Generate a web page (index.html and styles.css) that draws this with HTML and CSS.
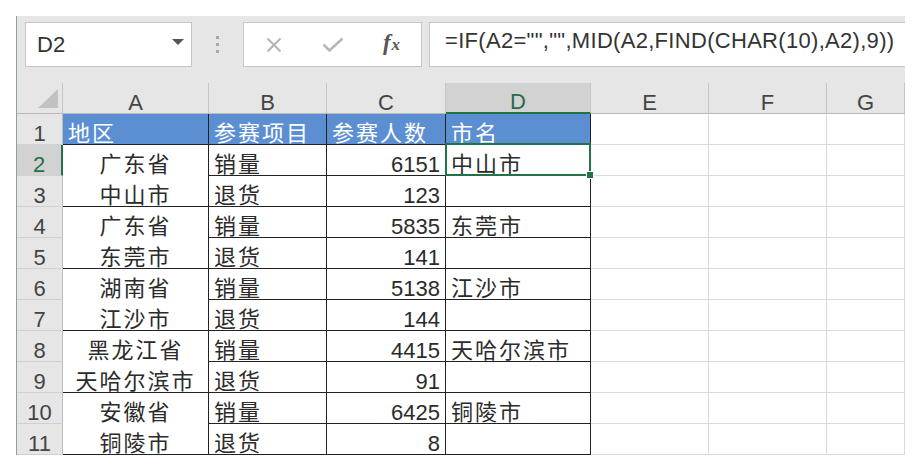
FILE: index.html
```html
<!DOCTYPE html>
<html lang="zh-CN">
<head>
    <meta charset="UTF-8">
    <meta name="viewport" content="width=device-width, initial-scale=1.0">
    <title>市名提取</title>
    <link rel="stylesheet" href="styles.css">
</head>
<body>
    <div class="excel">
        <!-- 编辑栏 -->
        <div class="fbar">
            <div class="namebox">
                <span>D2</span>
                <span class="caret"></span>
            </div>
            <div class="dots"><i></i><i></i><i></i></div>
            <div class="fxbox">
                <span class="btn">
                    <svg width="16" height="16" viewBox="0 0 16 16"><path d="M1.5 1.5 L14.5 14.5 M14.5 1.5 L1.5 14.5" stroke="#b3b3b3" stroke-width="2" fill="none"/></svg>
                </span>
                <span class="btn">
                    <svg width="22" height="15" viewBox="0 0 22 15"><path d="M1.5 7.5 L7.5 13.5 L20.5 1.5" stroke="#b8b8b8" stroke-width="2.6" fill="none"/></svg>
                </span>
                <span class="btn fx">f<span class="fx-x">x</span></span>
            </div>
            <div class="formula">=IF(A2="","",MID(A2,FIND(CHAR(10),A2),9))</div>
        </div>

        <!-- 工作表 -->
        <div class="sheet">
            <div class="ch corner"><svg width="20" height="19" viewBox="0 0 20 19"><polygon points="20,0 20,19 0,19" fill="#c2c2c2"/></svg></div>
            <div class="ch">A</div>
            <div class="ch">B</div>
            <div class="ch">C</div>
            <div class="ch sel">D</div>
            <div class="ch">E</div>
            <div class="ch">F</div>
            <div class="ch">G</div>

            <div class="rh">1</div>
            <div class="d hd cn">地区</div>
            <div class="d hd cn">参赛项目</div>
            <div class="d hd cn">参赛人数</div>
            <div class="d hd cn">市名</div>
            <div class="g"></div><div class="g"></div><div class="g"></div>

            <div class="rh sel">2</div>
            <div class="d m cn"><span>广东省</span><span>中山市</span></div>
            <div class="d cn">销量</div>
            <div class="d r">6151</div>
            <div class="d cn active">中山市<span class="selbox"><span class="handle"></span></span></div>
            <div class="g"></div><div class="g"></div><div class="g"></div>

            <div class="rh">3</div>
            <div class="d cn">退货</div>
            <div class="d r">123</div>
            <div class="d"></div>
            <div class="g"></div><div class="g"></div><div class="g"></div>

            <div class="rh">4</div>
            <div class="d m cn"><span>广东省</span><span>东莞市</span></div>
            <div class="d cn">销量</div>
            <div class="d r">5835</div>
            <div class="d cn">东莞市</div>
            <div class="g"></div><div class="g"></div><div class="g"></div>

            <div class="rh">5</div>
            <div class="d cn">退货</div>
            <div class="d r">141</div>
            <div class="d"></div>
            <div class="g"></div><div class="g"></div><div class="g"></div>

            <div class="rh">6</div>
            <div class="d m cn"><span>湖南省</span><span>江沙市</span></div>
            <div class="d cn">销量</div>
            <div class="d r">5138</div>
            <div class="d cn">江沙市</div>
            <div class="g"></div><div class="g"></div><div class="g"></div>

            <div class="rh">7</div>
            <div class="d cn">退货</div>
            <div class="d r">144</div>
            <div class="d"></div>
            <div class="g"></div><div class="g"></div><div class="g"></div>

            <div class="rh">8</div>
            <div class="d m cn"><span>黑龙江省</span><span>天哈尔滨市</span></div>
            <div class="d cn">销量</div>
            <div class="d r">4415</div>
            <div class="d cn">天哈尔滨市</div>
            <div class="g"></div><div class="g"></div><div class="g"></div>

            <div class="rh">9</div>
            <div class="d cn">退货</div>
            <div class="d r">91</div>
            <div class="d"></div>
            <div class="g"></div><div class="g"></div><div class="g"></div>

            <div class="rh">10</div>
            <div class="d m cn"><span>安徽省</span><span>铜陵市</span></div>
            <div class="d cn">销量</div>
            <div class="d r">6425</div>
            <div class="d cn">铜陵市</div>
            <div class="g"></div><div class="g"></div><div class="g"></div>

            <div class="rh">11</div>
            <div class="d cn">退货</div>
            <div class="d r">8</div>
            <div class="d"></div>
            <div class="g"></div><div class="g"></div><div class="g"></div>
        </div>
    </div>
</body>
</html>
```

FILE: styles.css
```css
* {
    margin: 0;
    padding: 0;
    box-sizing: border-box;
}

body {
    background: #fff;
    font-family: "Liberation Sans", "Noto Sans CJK SC", sans-serif;
    font-size: 22px;
}

.excel {
    margin: 16px 0 0 16px;
    width: 889px;
    border-left: 1px solid #8fa095;
}

/* 编辑栏 */
.fbar {
    height: 67px;
    background: #e6e6e6;
    display: flex;
    align-items: flex-start;
    padding: 6px 0 0 8px;
}

.namebox {
    width: 167px;
    height: 45px;
    border: 1px solid #c6c6c6;
    background: #fff;
    display: flex;
    align-items: center;
    justify-content: space-between;
    padding: 0 7px 0 11px;
    color: #333;
    line-height: 30px;
}

.caret {
    width: 0;
    height: 0;
    border-left: 6.5px solid transparent;
    border-right: 6.5px solid transparent;
    border-top: 6px solid #555;
    margin-bottom: 5px;
}

.dots {
    width: 51px;
    height: 45px;
    display: flex;
    flex-direction: column;
    align-items: center;
    justify-content: center;
    gap: 4px;
}

.dots i {
    display: block;
    width: 3px;
    height: 3px;
    background: #a8a8a8;
}

.fxbox {
    width: 179px;
    height: 45px;
    border: 1px solid #c6c6c6;
    background: #fff;
    display: flex;
}

.btn {
    width: 59px;
    display: flex;
    align-items: center;
    justify-content: center;
}

.fx {
    font-family: "Liberation Serif", serif;
    font-style: italic;
    font-weight: bold;
    color: #555;
    font-size: 23px;
    line-height: 24px;
    align-items: baseline;
    padding-top: 8px;
}

.fx-x {
    font-size: 17px;
    margin-left: 1px;
}

.formula {
    flex: 1;
    height: 45px;
    margin-left: 7px;
    border: 1px solid #c6c6c6;
    border-right: none;
    background: #fff;
    padding: 3px 0 0 15px;
    line-height: 30px;
    letter-spacing: 0.3px;
    color: #333;
    white-space: nowrap;
}

/* 工作表 */
.sheet {
    display: grid;
    grid-template-columns: 46px 146px 118px 119px 145px 118px 118px 78px;
    grid-auto-rows: 31px;
}

.sheet > div {
    display: flex;
    align-items: flex-end;
    line-height: 20px;
    white-space: nowrap;
}

.ch {
    background: #e6e6e6;
    border-right: 1px solid #c6c6c6;
    border-bottom: 1px solid #b9b9b9;
    justify-content: center;
    color: #444;
}

.ch.sel {
    background: #d2d2d2;
    color: #2d6b46;
    border-bottom: 2px solid #217346;
}

.sheet > .corner {
    justify-content: flex-end;
    padding: 0 4px 5px 0;
}

.rh {
    background: #e6e6e6;
    border-right: 1px solid #bdbdbd;
    border-bottom: 1px solid #d0d0d0;
    justify-content: center;
    color: #444;
}

.rh.sel {
    background: #d2d2d2;
    color: #217346;
    border-right: 2px solid #217346;
}

.g {
    border-right: 1px solid #dadada;
    border-bottom: 1px solid #dadada;
}

.d {
    border-right: 1px solid #222;
    border-bottom: 1px solid #222;
    color: #2b2b2b;
    padding: 0 5px;
}

.hd {
    background: #5b8fd2;
    color: #fff;
}

.cn {
    letter-spacing: 2px;
}

.sheet > .r {
    justify-content: flex-end;
}

.sheet > .m {
    grid-row: span 2;
    flex-direction: column;
    align-items: center;
    justify-content: flex-end;
    gap: 11px;
}

.m span {
    display: block;
}

.active {
    position: relative;
}

.selbox {
    position: absolute;
    left: -1px;
    top: -2px;
    right: -1px;
    bottom: -1px;
    border: 2px solid #217346;
}

.handle {
    position: absolute;
    right: -5px;
    bottom: -5px;
    width: 8px;
    height: 8px;
    background: #217346;
    border: 1px solid #fff;
}
```
